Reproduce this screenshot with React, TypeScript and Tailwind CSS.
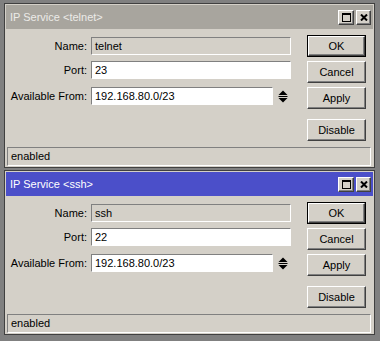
import React from 'react';

const raised =
  'border border-t-white border-l-white border-r-[#404040] border-b-[#404040] shadow-[inset_-1px_-1px_0_#808080]';
const sunken =
  'border border-t-[#808080] border-l-[#808080] border-r-white border-b-white';

const SpinArrows = () => (
  <svg width="10" height="15" viewBox="0 0 10 15" className="ml-[5px]">
    <polygon points="0.5,6 5,1.5 9.5,6" fill="#000" />
    <rect x="0.5" y="7" width="9" height="1" fill="#000" />
    <polygon points="0.5,9 9.5,9 5,13.5" fill="#000" />
  </svg>
);

const Button = ({ label, isDefault }: { label: string; isDefault?: boolean }) => (
  <div className={isDefault ? 'border border-black' : ''}>
    <div
      className={`${raised} flex items-center justify-center bg-[#d4d0c8] text-[11px] text-black ${
        isDefault ? 'h-[20px]' : 'h-[22px]'
      }`}
    >
      {label}
    </div>
  </div>
);

const Row = ({ label, children, className }: { label: string; children: React.ReactNode; className?: string }) => (
  <div className={`flex items-center ${className ?? ''}`}>
    <div className="w-[81px] whitespace-nowrap text-right text-[11px] leading-none text-black">{label}</div>
    <div className="ml-[4px] flex items-center">{children}</div>
  </div>
);

const ServiceWindow = ({
  name,
  port,
  active,
  className,
}: {
  name: string;
  port: string;
  active?: boolean;
  className?: string;
}) => (
  <div className={`ml-[4px] w-[371px] border border-[#404040] bg-[#d4d0c8] p-px ${className ?? ''}`}>
    <div
      className={`flex h-[24px] items-center justify-between pl-[4px] pr-[2px] ${
        active ? 'bg-[#4b4fc9] text-white' : 'bg-[#a8a59e] text-[#ecebe8]'
      }`}
    >
      <span className="text-[11px]">IP Service &lt;{name}&gt;</span>
      <div className="flex gap-[2px]">
        <div className={`${raised} flex h-[15px] w-[16px] items-center justify-center bg-[#d4d0c8]`}>
          <div className="h-[9px] w-[9px] border border-t-2 border-black" />
        </div>
        <div className={`${raised} flex h-[15px] w-[15px] items-center justify-center bg-[#d4d0c8]`}>
          <svg width="8" height="7" viewBox="0 0 8 7">
            <path d="M1 0.5 L7 6.5 M7 0.5 L1 6.5" stroke="#000" strokeWidth="2" />
          </svg>
        </div>
      </div>
    </div>

    <div className="flex">
      <div className="w-[285px] pt-[8px]">
        <Row label="Name:">
          <div className={`${sunken} flex h-[18px] w-[200px] items-center bg-[#d4d0c8] px-[3px] text-[11px] text-black`}>
            {name}
          </div>
        </Row>
        <Row label="Port:" className="mt-[6px]">
          <div className={`${sunken} flex h-[18px] w-[200px] items-center bg-white px-[3px] text-[11px] text-black`}>
            {port}
          </div>
        </Row>
        <Row label="Available From:" className="mt-[8px]">
          <div className={`${sunken} flex h-[18px] w-[182px] items-center bg-white px-[3px] text-[11px] text-black`}>
            192.168.80.0/23
          </div>
          <SpinArrows />
        </Row>
      </div>
      <div className="ml-[16px] flex w-[59px] flex-col pt-[6px]">
        <Button label="OK" isDefault />
        <div className="mt-[4px]">
          <Button label="Cancel" />
        </div>
        <div className="mt-[4px]">
          <Button label="Apply" />
        </div>
        <div className="mt-[10px]">
          <Button label="Disable" />
        </div>
      </div>
    </div>

    <div className={`${sunken} ml-[1px] mt-[6px] flex h-[19px] w-[364px] items-center px-[3px] text-[11px] text-black`}>
      enabled
    </div>
  </div>
);

export default function App() {
  return (
    <div
      className="h-[341px] w-[380px] overflow-hidden bg-[#808080] pt-[3px]"
      style={{ fontFamily: '"Liberation Sans", Arial, sans-serif' }}
    >
      <ServiceWindow name="telnet" port="23" />
      <ServiceWindow name="ssh" port="22" active className="mt-[2px]" />
    </div>
  );
}
